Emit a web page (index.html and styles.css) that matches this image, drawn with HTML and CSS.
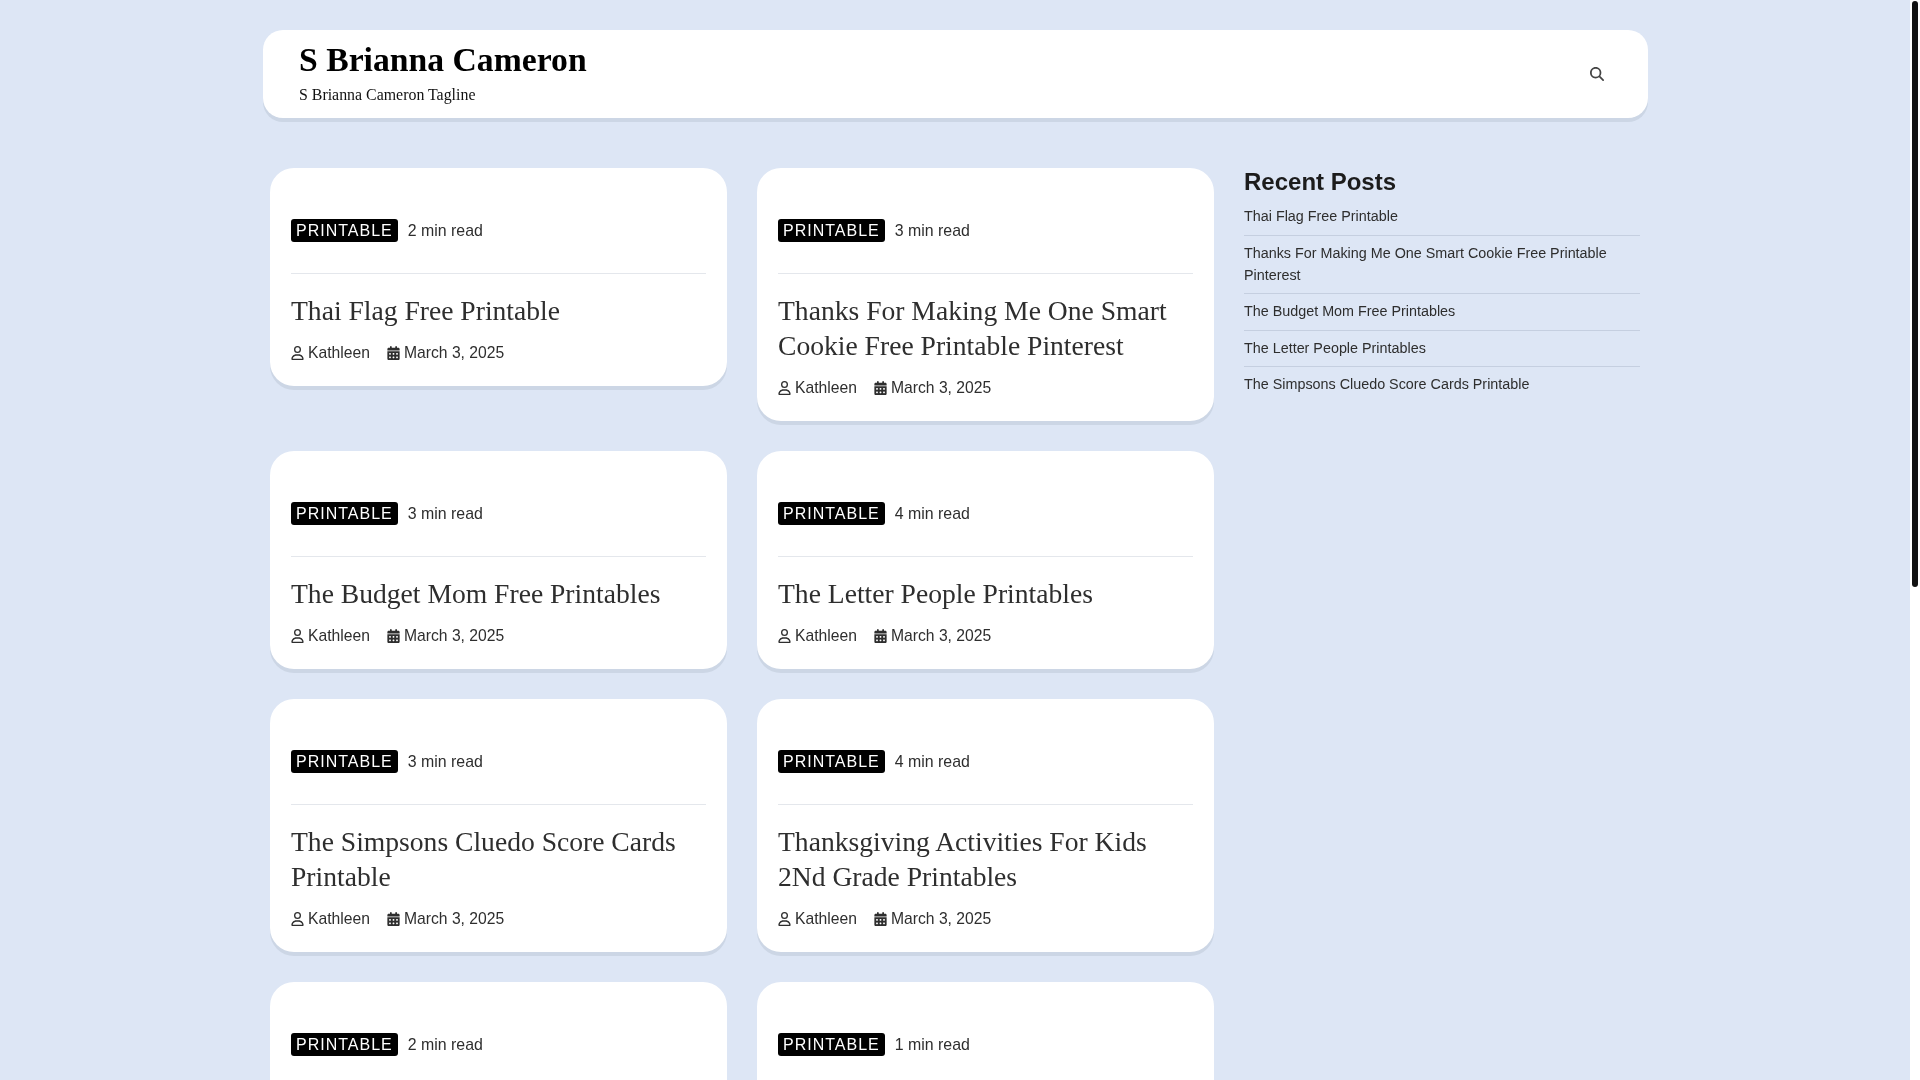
FILE: index.html
```html
<!DOCTYPE html>
<html lang="en">
<head>
    <meta charset="UTF-8">
    <meta name="viewport" content="width=device-width, initial-scale=1.0">
    <title>S Brianna Cameron</title>
    <link rel="stylesheet" href="styles.css">
</head>
<body>
    <svg class="icon-defs" aria-hidden="true">
        <symbol id="icon-user" viewBox="0 0 448 512"><path d="M304 128a80 80 0 1 0 -160 0 80 80 0 1 0 160 0zM96 128a128 128 0 1 1 256 0A128 128 0 1 1 96 128zM49.3 464H398.7c-8.9-63.3-63.3-112-129-112H178.3c-65.7 0-120.1 48.7-129 112zM0 482.3C0 383.8 79.8 304 178.3 304h91.4C368.2 304 448 383.8 448 482.3c0 16.4-13.3 29.7-29.7 29.7H29.7C13.3 512 0 498.7 0 482.3z"/></symbol>
        <symbol id="icon-calendar" viewBox="0 0 448 512"><path d="M128 0c17.7 0 32 14.3 32 32V64H288V32c0-17.7 14.3-32 32-32s32 14.3 32 32V64h48c26.5 0 48 21.5 48 48v48H0V112C0 85.5 21.5 64 48 64H96V32c0-17.7 14.3-32 32-32zM0 192H448V464c0 26.5-21.5 48-48 48H48c-26.5 0-48-21.5-48-48V192zm64 80v32c0 8.8 7.2 16 16 16h32c8.8 0 16-7.2 16-16V272c0-8.8-7.2-16-16-16H80c-8.8 0-16 7.2-16 16zm128 0v32c0 8.8 7.2 16 16 16h32c8.8 0 16-7.2 16-16V272c0-8.8-7.2-16-16-16H208c-8.8 0-16 7.2-16 16zm144-16c-8.8 0-16 7.2-16 16v32c0 8.8 7.2 16 16 16h32c8.8 0 16-7.2 16-16V272c0-8.8-7.2-16-16-16H336zM64 400v32c0 8.8 7.2 16 16 16h32c8.8 0 16-7.2 16-16V400c0-8.8-7.2-16-16-16H80c-8.8 0-16 7.2-16 16zm144-16c-8.8 0-16 7.2-16 16v32c0 8.8 7.2 16 16 16h32c8.8 0 16-7.2 16-16V400c0-8.8-7.2-16-16-16H208zm112 16v32c0 8.8 7.2 16 16 16h32c8.8 0 16-7.2 16-16V400c0-8.8-7.2-16-16-16H336c-8.8 0-16 7.2-16 16z"/></symbol>
    </svg>

    <div class="page">
        <header class="site-header">
            <div class="branding">
                <h1 class="site-title">S Brianna Cameron</h1>
                <p class="site-tagline">S Brianna Cameron Tagline</p>
            </div>
            <button class="search-button" aria-label="Search">
                <svg viewBox="0 0 512 512"><path d="M416 208c0 45.9-14.9 88.3-40 122.7L502.6 457.4c12.5 12.5 12.5 32.8 0 45.3s-32.8 12.5-45.3 0L330.7 376c-34.4 25.2-76.8 40-122.7 40C93.1 416 0 322.9 0 208S93.1 0 208 0S416 93.1 416 208zM208 352a144 144 0 1 0 0-288 144 144 0 1 0 0 288z"/></svg>
            </button>
        </header>

        <div class="content">
            <main class="posts">
                <article class="post-card">
                    <div class="post-top"><span class="badge">PRINTABLE</span><span class="read-time">2 min read</span></div>
                    <h2 class="post-title">Thai Flag Free Printable</h2>
                    <div class="post-meta">
                        <span class="meta-item"><svg class="meta-icon"><use href="#icon-user"/></svg>Kathleen</span>
                        <span class="meta-item"><svg class="meta-icon"><use href="#icon-calendar"/></svg>March 3, 2025</span>
                    </div>
                </article>
                <article class="post-card">
                    <div class="post-top"><span class="badge">PRINTABLE</span><span class="read-time">3 min read</span></div>
                    <h2 class="post-title">Thanks For Making Me One Smart Cookie Free Printable Pinterest</h2>
                    <div class="post-meta">
                        <span class="meta-item"><svg class="meta-icon"><use href="#icon-user"/></svg>Kathleen</span>
                        <span class="meta-item"><svg class="meta-icon"><use href="#icon-calendar"/></svg>March 3, 2025</span>
                    </div>
                </article>
                <article class="post-card">
                    <div class="post-top"><span class="badge">PRINTABLE</span><span class="read-time">3 min read</span></div>
                    <h2 class="post-title">The Budget Mom Free Printables</h2>
                    <div class="post-meta">
                        <span class="meta-item"><svg class="meta-icon"><use href="#icon-user"/></svg>Kathleen</span>
                        <span class="meta-item"><svg class="meta-icon"><use href="#icon-calendar"/></svg>March 3, 2025</span>
                    </div>
                </article>
                <article class="post-card">
                    <div class="post-top"><span class="badge">PRINTABLE</span><span class="read-time">4 min read</span></div>
                    <h2 class="post-title">The Letter People Printables</h2>
                    <div class="post-meta">
                        <span class="meta-item"><svg class="meta-icon"><use href="#icon-user"/></svg>Kathleen</span>
                        <span class="meta-item"><svg class="meta-icon"><use href="#icon-calendar"/></svg>March 3, 2025</span>
                    </div>
                </article>
                <article class="post-card">
                    <div class="post-top"><span class="badge">PRINTABLE</span><span class="read-time">3 min read</span></div>
                    <h2 class="post-title">The Simpsons Cluedo Score Cards Printable</h2>
                    <div class="post-meta">
                        <span class="meta-item"><svg class="meta-icon"><use href="#icon-user"/></svg>Kathleen</span>
                        <span class="meta-item"><svg class="meta-icon"><use href="#icon-calendar"/></svg>March 3, 2025</span>
                    </div>
                </article>
                <article class="post-card">
                    <div class="post-top"><span class="badge">PRINTABLE</span><span class="read-time">4 min read</span></div>
                    <h2 class="post-title">Thanksgiving Activities For Kids 2Nd Grade Printables</h2>
                    <div class="post-meta">
                        <span class="meta-item"><svg class="meta-icon"><use href="#icon-user"/></svg>Kathleen</span>
                        <span class="meta-item"><svg class="meta-icon"><use href="#icon-calendar"/></svg>March 3, 2025</span>
                    </div>
                </article>
                <article class="post-card">
                    <div class="post-top"><span class="badge">PRINTABLE</span><span class="read-time">2 min read</span></div>
                </article>
                <article class="post-card">
                    <div class="post-top"><span class="badge">PRINTABLE</span><span class="read-time">1 min read</span></div>
                </article>
            </main>

            <aside class="sidebar">
                <h2 class="sidebar-title">Recent Posts</h2>
                <ul class="recent-list">
                    <li>Thai Flag Free Printable</li>
                    <li>Thanks For Making Me One Smart Cookie Free Printable Pinterest</li>
                    <li>The Budget Mom Free Printables</li>
                    <li>The Letter People Printables</li>
                    <li>The Simpsons Cluedo Score Cards Printable</li>
                </ul>
            </aside>
        </div>
    </div>

    <div class="scrollbar"><div class="scrollbar-thumb"></div></div>
</body>
</html>
```

FILE: styles.css
```css
body {
    margin: 0;
    background-color: #dde6f5;
    color: #2e2e2e;
    font-family: "Liberation Sans", Arial, sans-serif;
    font-size: 16px;
}

.icon-defs {
    display: none;
}

.page {
    width: 1385px;
    margin-left: 263px;
    padding-top: 30px;
    will-change: transform;
}

/* the browser scrollbar does not show in the picture, so it is drawn */
.scrollbar {
    position: fixed;
    top: 0;
    right: 0;
    bottom: 0;
    width: 10px;
    background-color: #fff;
}

.scrollbar-thumb {
    width: 6px;
    height: 586px;
    margin: 1px 2px 0;
    background-color: #111;
    border-radius: 3px;
}

.site-header {
    display: flex;
    align-items: center;
    justify-content: space-between;
    height: 88px;
    padding: 0 36px;
    background-color: #fff;
    border-radius: 20px;
    box-shadow: 0 4px 0 #ccd6e5;
    box-sizing: border-box;
}

.branding {
    margin-top: -5px;
}

.site-title {
    margin: 0;
    color: #000;
    font-family: "Liberation Serif", "Times New Roman", serif;
    font-size: 33.7px;
    font-weight: bold;
    line-height: 40px;
}

.site-tagline {
    margin: 6px 0 0;
    color: #111;
    font-family: "Liberation Serif", "Times New Roman", serif;
    font-size: 15.9px;
    line-height: 18px;
}

.search-button {
    width: 14px;
    height: 14px;
    margin-right: 8px;
    padding: 0;
    background: none;
    border: none;
}

.search-button svg {
    display: block;
    width: 14px;
    height: 14px;
    fill: #444;
}

.content {
    display: flex;
    padding: 50px 8px 0 7px;
}

.posts {
    display: grid;
    flex: 0 0 944px;
    grid-template-columns: 457px 457px;
    column-gap: 30px;
    row-gap: 30px;
    align-items: start;
    align-self: flex-start;
}

.post-card {
    padding: 51px 21px 23px;
    background-color: #fff;
    border-radius: 24px;
    box-shadow: 0 4px 0 #ccd6e5;
}

.post-top {
    display: flex;
    align-items: center;
    padding-bottom: 31px;
    border-bottom: 1px solid #e4e7ec;
}

.badge {
    padding: 0 5px;
    background-color: #000;
    border-radius: 3px;
    color: #fff;
    font-size: 16px;
    letter-spacing: 1px;
    line-height: 23px;
}

.read-time {
    margin-left: 10px;
    font-size: 15.9px;
    line-height: 23px;
}

.post-title {
    margin: 19px 0 0;
    font-family: "Liberation Serif", "Times New Roman", serif;
    font-size: 27.6px;
    font-weight: normal;
    line-height: 35px;
}

.post-meta {
    display: flex;
    gap: 17px;
    margin-top: 15px;
    font-size: 15.7px;
    line-height: 20px;
}

.meta-item {
    display: flex;
    align-items: center;
}

.meta-icon {
    width: 13px;
    height: 14px;
    margin-right: 4px;
    fill: #2e2e2e;
}

.sidebar {
    flex: 0 0 396px;
    margin-left: 30px;
}

.sidebar-title {
    margin: 0 0 3.4px;
    color: #1c1c1c;
    font-size: 24px;
    font-weight: bold;
    line-height: 28px;
}

.recent-list {
    margin: 0;
    padding: 0;
    list-style: none;
    font-size: 14.35px;
    line-height: 21.6px;
}

.recent-list li {
    padding: 7px 0;
    border-bottom: 1px solid #c5cfe0;
}

.recent-list li:last-child {
    border-bottom: none;
}
```
